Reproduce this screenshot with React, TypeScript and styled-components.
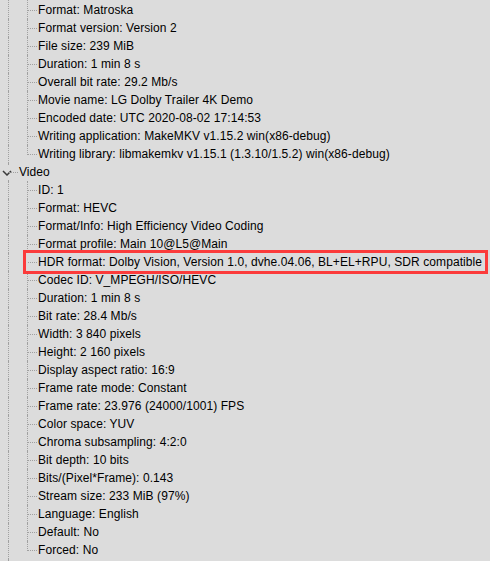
import React from 'react';
import styled, { createGlobalStyle } from 'styled-components';

const Global = createGlobalStyle`
  html, body { margin: 0; padding: 0; background: #dcdcdc; overflow: hidden; }
  body {
    width: 490px;
    height: 561px;
    font-family: "Liberation Sans", Arial, sans-serif;
    font-size: 12px;
    color: #000;
  }
`;

const LINE = '#a0a0a0';

const Viewport = styled.div`
  width: 490px;
  height: 561px;
  overflow: hidden;
`;

const Scroll = styled.div`
  display: flex;
  flex-direction: column;
  padding-top: 1px;
`;

const Row = styled.div`
  position: relative;
  display: flex;
  align-items: center;
  height: 18px;
  white-space: nowrap;
`;

const Guide = styled.div<{ $line: boolean; $continued?: boolean }>`
  position: relative;
  flex: none;
  width: 19px;
  height: 18px;
  &::before {
    content: '';
    display: ${p => (p.$line ? 'block' : 'none')};
    position: absolute;
    left: 8px;
    top: ${p => (p.$continued ? -1 : 0)}px;
    height: ${p => (p.$continued ? 19 : 18)}px;
    border-left: 1px dotted ${LINE};
  }
`;

const Connector = styled.div<{ $last: boolean; $hideV?: boolean; $continued?: boolean; $stub?: boolean }>`
  position: relative;
  flex: none;
  width: 19px;
  height: 18px;
  &::before {
    content: '';
    display: ${p => (p.$hideV ? 'none' : 'block')};
    position: absolute;
    left: 8px;
    top: ${p => (p.$continued ? -1 : 0)}px;
    height: ${p => (p.$last ? 10 : 18) + (p.$continued ? 1 : 0)}px;
    border-left: 1px dotted ${LINE};
  }
  &::after {
    content: '';
    display: ${p => (p.$stub ? 'none' : 'block')};
    position: absolute;
    left: 9px;
    top: 9px;
    width: 9px;
    border-top: 1px dotted ${LINE};
  }
`;

const ExpandButton = styled.span`
  position: absolute;
  left: 1px;
  top: 3px;
  width: 11px;
  height: 13px;
  background: #dcdcdc;
  display: flex;
  align-items: center;
  justify-content: center;
`;

const Label = styled.span`
  line-height: 18px;
  letter-spacing: 0.08px;
  color: #000;
`;

const Annotation = styled.span`
  position: absolute;
  left: 23px;
  right: 2px;
  top: -3px;
  bottom: -3px;
  border: 3px solid #fb3b3b;
  z-index: 1;
  pointer-events: none;
`;

type Item = { text: string; highlight?: boolean };
type Section = { title?: string; items: Item[]; continued?: boolean };

const sections: Section[] = [
  {
    continued: true,
    items: [
      { text: 'Format: Matroska' },
      { text: 'Format version: Version 2' },
      { text: 'File size: 239 MiB' },
      { text: 'Duration: 1 min 8 s' },
      { text: 'Overall bit rate: 29.2 Mb/s' },
      { text: 'Movie name: LG Dolby Trailer 4K Demo' },
      { text: 'Encoded date: UTC 2020-08-02 17:14:53' },
      { text: 'Writing application: MakeMKV v1.15.2 win(x86-debug)' },
      { text: 'Writing library: libmakemkv v1.15.1 (1.3.10/1.5.2) win(x86-debug)' },
    ],
  },
  {
    title: 'Video',
    items: [
      { text: 'ID: 1' },
      { text: 'Format: HEVC' },
      { text: 'Format/Info: High Efficiency Video Coding' },
      { text: 'Format profile: Main 10@L5@Main' },
      {
        text: 'HDR format: Dolby Vision, Version 1.0, dvhe.04.06, BL+EL+RPU, SDR compatible',
        highlight: true,
      },
      { text: 'Codec ID: V_MPEGH/ISO/HEVC' },
      { text: 'Duration: 1 min 8 s' },
      { text: 'Bit rate: 28.4 Mb/s' },
      { text: 'Width: 3 840 pixels' },
      { text: 'Height: 2 160 pixels' },
      { text: 'Display aspect ratio: 16:9' },
      { text: 'Frame rate mode: Constant' },
      { text: 'Frame rate: 23.976 (24000/1001) FPS' },
      { text: 'Color space: YUV' },
      { text: 'Chroma subsampling: 4:2:0' },
      { text: 'Bit depth: 10 bits' },
      { text: 'Bits/(Pixel*Frame): 0.143' },
      { text: 'Stream size: 233 MiB (97%)' },
      { text: 'Language: English' },
      { text: 'Default: No' },
      { text: 'Forced: No' },
    ],
  },
];

const Chevron = () => (
  <svg width="10" height="6" viewBox="0 0 10 6">
    <path d="M1 1 L5 5 L9 1" fill="none" stroke="#3a3a3a" strokeWidth="1.5" />
  </svg>
);

const SectionView = ({ section }: { section: Section }) => (
  <>
    {section.title && (
      <Row>
        <Connector $last={false}>
          <ExpandButton>
            <Chevron />
          </ExpandButton>
        </Connector>
        <Label>{section.title}</Label>
      </Row>
    )}
    {section.items.map((item, i) => {
      const continued = !!section.continued && i === 0;
      return (
        <Row key={i}>
          <Guide $line $continued={continued} />
          <Connector
            $last={i === section.items.length - 1}
            $hideV={item.highlight}
            $continued={continued}
          />
          <Label>{item.text}</Label>
          {item.highlight && <Annotation />}
        </Row>
      );
    })}
  </>
);

export default function App() {
  return (
    <Viewport>
      <Global />
      <Scroll>
        {sections.map((s, i) => (
          <SectionView key={i} section={s} />
        ))}
        {/* next top-level node, scrolled below the visible area */}
        <Row>
          <Connector $last={false} $stub />
        </Row>
      </Scroll>
    </Viewport>
  );
}
